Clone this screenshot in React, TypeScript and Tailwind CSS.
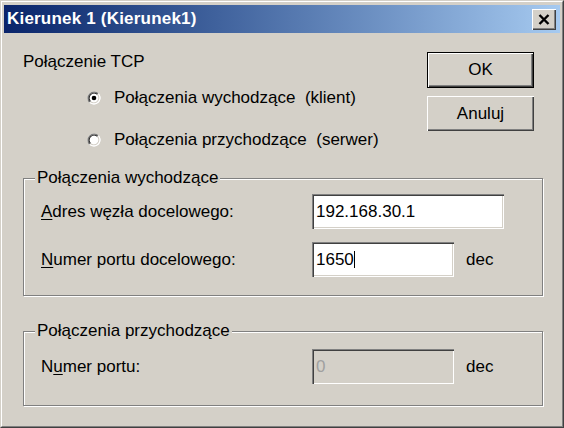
import React from "react";

function Radio({ checked }: { checked?: boolean }) {
  return (
    <svg width="14" height="14" viewBox="0 0 14 14" className="shrink-0">
      <circle cx="7" cy="7" r="6.5" fill="#ffffff" />
      <path d="M2.76 11.24A6 6 0 0 1 11.24 2.76" stroke="#7a7a7a" strokeWidth="1.4" fill="none" />
      <path d="M11.24 2.76A6 6 0 0 1 2.76 11.24" stroke="#ffffff" strokeWidth="1.4" fill="none" />
      <path d="M3.54 10.46A4.9 4.9 0 0 1 10.46 3.54" stroke="#303030" strokeWidth="1.3" fill="none" />
      <path d="M10.46 3.54A4.9 4.9 0 0 1 3.54 10.46" stroke="#D4D0C8" strokeWidth="1.3" fill="none" />
      <circle cx="7" cy="7" r="4.2" fill="#ffffff" />
      {checked && <circle cx="7" cy="7" r="2.3" fill="#000000" />}
    </svg>
  );
}

const sunken =
  "shadow-[inset_1px_1px_0_#808080,inset_2px_2px_0_#404040,inset_-1px_-1px_0_#ffffff,inset_-2px_-2px_0_#D4D0C8]";

export default function App() {
  return (
    <div className="w-[564px] h-[428px] bg-[#D4D0C8] border border-t-[#D4D0C8] border-l-[#D4D0C8] border-r-[#404040] border-b-[#404040] font-['Liberation_Sans',Arial,sans-serif] text-black text-[17px] leading-[20px]">
      <div className="h-full border border-t-white border-l-white border-r-[#808080] border-b-[#808080] p-[2px] flex flex-col">
        {/* Title bar */}
        <div className="mt-px h-[28px] flex items-center justify-between bg-linear-to-r from-[#0A246A] to-[#A6CAF0] pl-[3px] pr-[4px]">
          <span className="text-white font-bold text-[17px] leading-[20px] tracking-[0.2px]">Kierunek 1 (Kierunek1)</span>
          <div className="w-[24px] h-[21px] bg-[#D4D0C8] flex items-center justify-center shadow-[inset_1px_1px_0_#ffffff,inset_-1px_-1px_0_#404040,inset_-2px_-2px_0_#808080]">
            <svg width="12" height="11" viewBox="0 0 12 11">
              <path d="M1.5 1L10.5 10M10.5 1L1.5 10" stroke="#000" strokeWidth="2.4" />
            </svg>
          </div>
        </div>

        {/* Top section */}
        <div className="mt-[19px] flex justify-between">
          <div className="pl-[19px] flex flex-col">
            <div>Połączenie TCP</div>
            <div className="mt-[16px] ml-[64px] flex items-center gap-[13px]">
              <Radio checked />
              <span>Połączenia wychodzące&nbsp; (klient)</span>
            </div>
            <div className="mt-[22px] ml-[64px] flex items-center gap-[13px]">
              <Radio />
              <span>Połączenia przychodzące&nbsp; (serwer)</span>
            </div>
          </div>
          <div className="pr-[26px] flex flex-col gap-[8px]">
            <div className="w-[107px] h-[36px] border border-black flex items-center justify-center shadow-[inset_1px_1px_0_#ffffff,inset_-1px_-1px_0_#404040,inset_-2px_-2px_0_#808080]">
              OK
            </div>
            <div className="w-[107px] h-[35px] flex items-center justify-center shadow-[inset_1px_1px_0_#ffffff,inset_-1px_-1px_0_#404040,inset_-2px_-2px_0_#808080]">
              Anuluj
            </div>
          </div>
        </div>

        {/* Group 1 */}
        <div className="mt-[28px] ml-[19px] w-[520px] h-[118px] border border-[#808080] shadow-[inset_1px_1px_0_#ffffff,1px_1px_0_#ffffff] flex flex-col">
          <span className="self-start -mt-[11px] ml-[11px] px-[2px] bg-[#D4D0C8]">Połączenia wychodzące</span>
          <div className="mt-[6px] pl-[17px] flex items-center">
            <span className="w-[271px]">
              <span className="underline underline-offset-2">A</span>dres węzła docelowego:
            </span>
            <div className={`w-[192px] h-[35px] bg-white flex items-center pl-[4px] ${sunken}`}>192.168.30.1</div>
          </div>
          <div className="mt-[13px] pl-[17px] flex items-center">
            <span className="w-[271px]">
              <span className="underline underline-offset-2">N</span>umer portu docelowego:
            </span>
            <div className={`w-[142px] h-[35px] bg-white flex items-center pl-[4px] ${sunken}`}>
              1650<span className="inline-block w-px h-[17px] bg-black" />
            </div>
            <span className="ml-[12px]">dec</span>
          </div>
        </div>

        {/* Group 2 */}
        <div className="mt-[35px] ml-[19px] w-[520px] h-[75px] border border-[#808080] shadow-[inset_1px_1px_0_#ffffff,1px_1px_0_#ffffff] flex flex-col">
          <span className="self-start -mt-[11px] ml-[11px] px-[2px] bg-[#D4D0C8]">Połączenia przychodzące</span>
          <div className="mt-[8px] pl-[17px] flex items-center">
            <span className="w-[271px]">
              N<span className="underline underline-offset-2">u</span>mer portu:
            </span>
            <div className={`w-[142px] h-[35px] bg-[#D4D0C8] flex items-center pl-[4px] text-[#A0A0A0] ${sunken}`}>0</div>
            <span className="ml-[12px]">dec</span>
          </div>
        </div>
      </div>
    </div>
  );
}
